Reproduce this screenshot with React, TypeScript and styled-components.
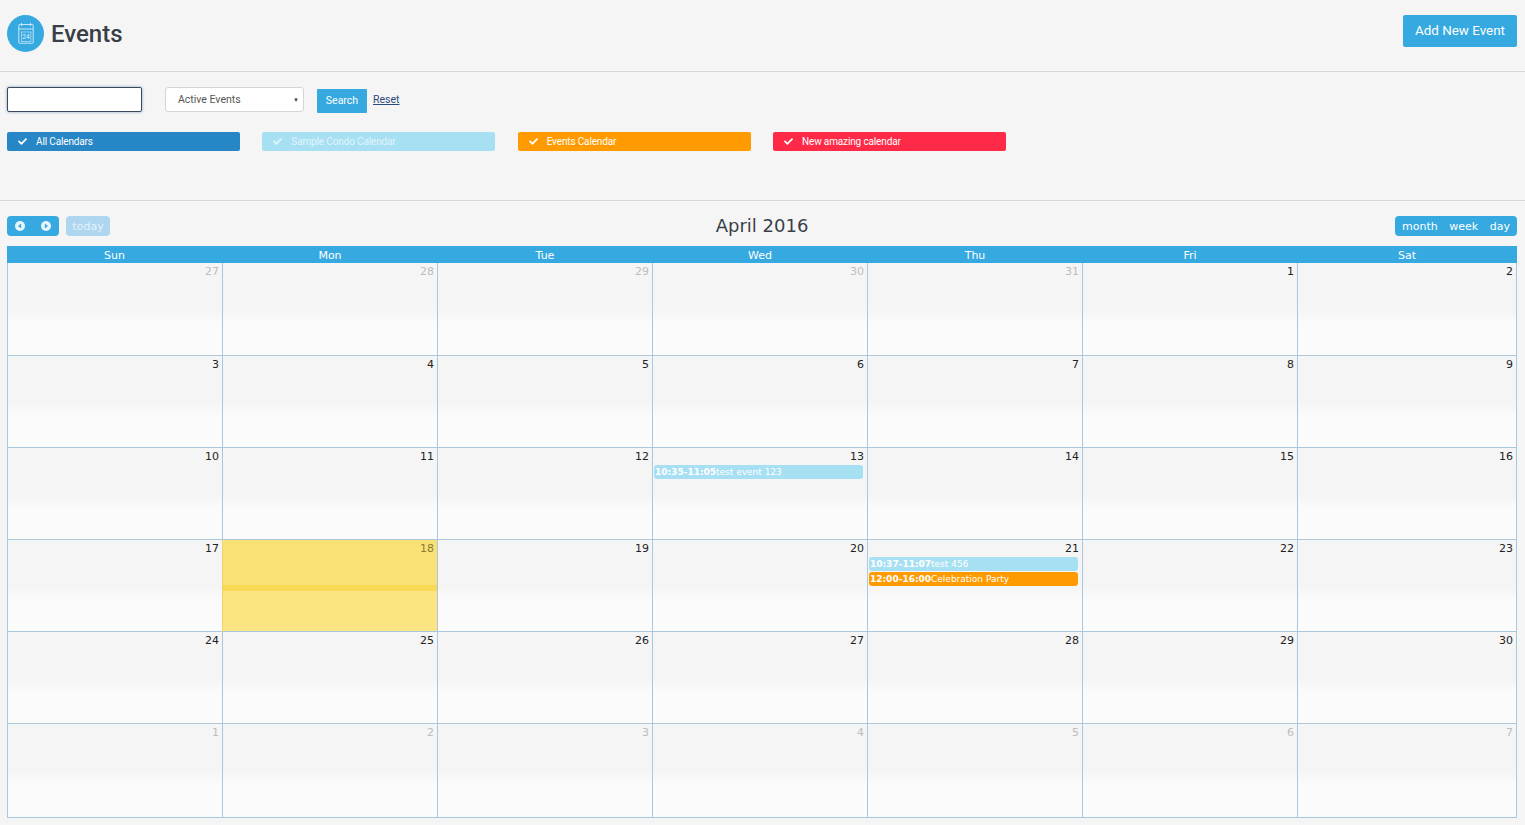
import * as React from "react";
import styled, { createGlobalStyle } from "styled-components";
import { FaCheck } from "react-icons/fa";

const BLUE = "#36a9e1";

const GlobalStyle = createGlobalStyle`
  html, body {
    margin: 0;
    padding: 0;
    background: #f5f5f5;
    font-family: "Roboto", "Liberation Sans", sans-serif;
  }
`;

const Page = styled.div`
  width: 1525px;
  height: 825px;
  overflow: hidden;
  background: #f5f5f5;
`;

const Header = styled.header`
  height: 71px;
  box-sizing: border-box;
  padding: 15px 8px 0 7px;
  display: flex;
  justify-content: space-between;
  align-items: flex-start;
`;

const TitleWrap = styled.div`
  display: flex;
  align-items: center;
  gap: 7px;
`;

const IconCircle = styled.div`
  width: 37px;
  height: 37px;
  border-radius: 50%;
  background: ${BLUE};
  display: flex;
  align-items: center;
  justify-content: center;
`;

const Title = styled.h1`
  margin: 0;
  padding-top: 1px;
  font-size: 24px;
  font-weight: 500;
  color: #393e46;
  line-height: 36px;
`;

const AddButton = styled.button`
  width: 114px;
  height: 32px;
  padding: 0 0 1px;
  border: 0;
  border-radius: 2px;
  background: ${BLUE};
  color: #fff;
  font: 400 13.4px "Roboto", sans-serif;
`;

const Divider = styled.div`
  height: 1px;
  background: #d8d8d8;
`;

const Filters = styled.section`
  height: 128px;
  box-sizing: border-box;
  padding: 15px 7px 0;
`;

const FilterRow = styled.div`
  display: flex;
  align-items: flex-start;
`;

const SearchInput = styled.input`
  width: 135px;
  height: 25px;
  box-sizing: border-box;
  border: 1px solid #3b4a5e;
  border-radius: 2px;
  background: #fff;
  box-shadow: 0 0 3px rgba(54, 100, 150, 0.6);
  outline: 0;
`;

const SelectBox = styled.div`
  width: 139px;
  height: 25px;
  margin-left: 23px;
  box-sizing: border-box;
  padding: 0 4px 0 12px;
  border: 1px solid #d5d5d5;
  border-radius: 3px;
  background: #fff;
  display: flex;
  align-items: center;
  justify-content: space-between;
  font-size: 10.5px;
  color: #555;
`;

const Caret = styled.span`
  font-size: 6px;
  color: #444;
`;

const SearchButton = styled.button`
  width: 50px;
  height: 24px;
  margin: 2px 0 0 13px;
  padding: 0 0 2px;
  border: 0;
  border-radius: 1px;
  background: ${BLUE};
  color: #fff;
  font: 400 10.5px "Roboto", sans-serif;
`;

const ResetLink = styled.a`
  margin: 6px 0 0 6px;
  font-size: 10.5px;
  line-height: 13px;
  color: #2c4a7c;
  text-decoration: underline;
`;

const ChipRow = styled.div`
  display: flex;
  gap: 22.33px;
  margin-top: 19px;
`;

const Chip = styled.div<{ $bg: string; $faded?: boolean }>`
  width: 233px;
  height: 19px;
  box-sizing: border-box;
  padding-left: 11px;
  border-radius: 2px;
  background: ${(p) => p.$bg};
  color: ${(p) => (p.$faded ? "#e2f4fb" : "#fff")};
  font-size: 10px;
  letter-spacing: -0.14px;
  display: flex;
  align-items: center;
  gap: 9px;

  svg {
    width: 9px;
    height: 9px;
  }
`;

const CalendarWrap = styled.section`
  padding: 15px 8px 0 7px;
  font-family: "DejaVu Sans", "Liberation Sans", sans-serif;
`;

const Toolbar = styled.div`
  position: relative;
  height: 30px;
  display: flex;
  justify-content: space-between;
  align-items: flex-start;
`;

const ToolGroup = styled.div`
  display: flex;
  gap: 7px;
`;

const Nav = styled.div`
  width: 52px;
  height: 20px;
  border-radius: 4px;
  background: ${BLUE};
  display: flex;
  align-items: center;
  justify-content: space-between;
  padding: 0 8px;
  box-sizing: border-box;
`;

const TodayButton = styled.div`
  width: 44px;
  height: 20px;
  border-radius: 4px;
  background: #aed6ee;
  color: #e4f2fa;
  font-size: 11px;
  line-height: 22px;
  text-align: center;
`;

const MonthTitle = styled.div`
  position: absolute;
  left: 0;
  right: 0;
  top: -1px;
  text-align: center;
  font-size: 18px;
  line-height: 22px;
  color: #3a3f47;
`;

const ViewSwitch = styled.div`
  height: 20px;
  width: 122px;
  box-sizing: border-box;
  padding: 0 7px;
  border-radius: 4px;
  background: ${BLUE};
  color: #fff;
  font-size: 11px;
  line-height: 22px;
  display: flex;
  justify-content: space-between;
`;

const Grid = styled.div`
  display: grid;
  grid-template-columns: 216px repeat(5, 215px) 219px;
  grid-template-rows: 17px 93px repeat(4, 92px) 94px;
`;

const HeadCell = styled.div`
  padding-right: 1px;
  background: ${BLUE};
  color: #fff;
  font-size: 11px;
  line-height: 19px;
  text-align: center;
`;

const Cell = styled.div<{ $today?: boolean; $first?: boolean }>`
  box-sizing: border-box;
  padding: 2px 3px 0 1px;
  border-bottom: 1px solid #a9c8de;
  border-right: 1px solid #a9c8de;
  border-left: ${(p) => (p.$first ? "1px solid #a9c8de" : "0")};
  box-shadow: ${(p) => (p.$today ? "-1px 0 0 #eed36a" : "none")};
  background: ${(p) =>
    p.$today
      ? "linear-gradient(#f9e275 0, #f9e275 50%, #f8d955 50%, #f8d955 56%, #fbe583 56%, #fbe583 100%)"
      : "linear-gradient(#f5f5f5 0, #f5f5f5 52%, #fbfbfb 65%, #fbfbfb 100%)"};
`;

const DayNumber = styled.div<{ $muted?: boolean; $today?: boolean }>`
  margin-bottom: 2px;
  text-align: right;
  font-size: 11px;
  line-height: 13px;
  color: ${(p) => (p.$muted ? "#bdbdbd" : p.$today ? "#8a7a35" : "#222")};
`;

const EventBar = styled.div<{ $bg: string }>`
  width: 209px;
  height: 14px;
  margin-bottom: 1px;
  padding-left: 1px;
  box-sizing: border-box;
  border-radius: 3px;
  background: ${(p) => p.$bg};
  color: #fff;
  font-size: 9px;
  line-height: 14px;
  white-space: nowrap;
  overflow: hidden;

  b {
    font-weight: 700;
  }
`;

const CalendarIcon = () => (
  <svg width="16" height="21" viewBox="0 0 16 21" fill="none" stroke="#d8eefa" strokeWidth="0.9">
    <rect x="0.8" y="1.5" width="14.4" height="18.7" rx="0.8" />
    <path d="M0.8 6h14.4M3.5 0v3M12.5 0v3" />
    <rect x="3.3" y="9" width="9.6" height="9.6" strokeWidth="0.6" />
    <text x="8" y="16" textAnchor="middle" fontSize="6.5" fill="#e6f5fc" stroke="none" fontFamily="Roboto, sans-serif">
      24
    </text>
  </svg>
);

const NavArrow = ({ dir }: { dir: "left" | "right" }) => (
  <svg width="10" height="10" viewBox="0 0 10 10">
    <circle cx="5" cy="5" r="5" fill="#e8f6fd" />
    <path d={dir === "left" ? "M6.2 2.6v4.8L3 5z" : "M3.8 2.6v4.8L7 5z"} fill={BLUE} />
  </svg>
);

const chips = [
  { label: "All Calendars", bg: "#2787c6" },
  { label: "Sample Condo Calendar", bg: "#a6e0f2", faded: true },
  { label: "Events Calendar", bg: "#ff9b00" },
  { label: "New amazing calendar", bg: "#ff2a48" },
];

const dayNames = ["Sun", "Mon", "Tue", "Wed", "Thu", "Fri", "Sat"];

type CalEvent = { time: string; title: string; bg: string };

// keyed by cell index in the 42 cell grid
const events: Record<number, CalEvent[]> = {
  17: [{ time: "10:35-11:05", title: "test event 123", bg: "#a6e0f2" }],
  25: [
    { time: "10:37-11:07", title: "test 456", bg: "#a6e0f2" },
    { time: "12:00-16:00", title: "Celebration Party", bg: "#ff9b00" },
  ],
};

// 42 cells, starting from Sunday 27 March
const days = Array.from({ length: 42 }, (_, i) => {
  if (i < 5) return { n: 27 + i, muted: true };
  if (i < 35) return { n: i - 4, muted: false };
  return { n: i - 34, muted: true };
});

const App: React.FC = () => (
  <Page>
    <GlobalStyle />
    <Header>
      <TitleWrap>
        <IconCircle>
          <CalendarIcon />
        </IconCircle>
        <Title>Events</Title>
      </TitleWrap>
      <AddButton>Add New Event</AddButton>
    </Header>
    <Divider />
    <Filters>
      <FilterRow>
        <SearchInput />
        <SelectBox>
          Active Events
          <Caret>▼</Caret>
        </SelectBox>
        <SearchButton>Search</SearchButton>
        <ResetLink href="#">Reset</ResetLink>
      </FilterRow>
      <ChipRow>
        {chips.map((c) => (
          <Chip key={c.label} $bg={c.bg} $faded={c.faded}>
            <FaCheck />
            {c.label}
          </Chip>
        ))}
      </ChipRow>
    </Filters>
    <Divider />
    <CalendarWrap>
      <Toolbar>
        <ToolGroup>
          <Nav>
            <NavArrow dir="left" />
            <NavArrow dir="right" />
          </Nav>
          <TodayButton>today</TodayButton>
        </ToolGroup>
        <MonthTitle>April 2016</MonthTitle>
        <ViewSwitch>
          <span>month</span>
          <span>week</span>
          <span>day</span>
        </ViewSwitch>
      </Toolbar>
      <Grid>
        {dayNames.map((d) => (
          <HeadCell key={d}>{d}</HeadCell>
        ))}
        {days.map((d, i) => (
          <Cell key={i} $first={i % 7 === 0} $today={i === 22}>
            <DayNumber $muted={d.muted} $today={i === 22}>
              {d.n}
            </DayNumber>
            {(events[i] || []).map((e) => (
              <EventBar key={e.time} $bg={e.bg}>
                <b>{e.time}</b>
                {e.title}
              </EventBar>
            ))}
          </Cell>
        ))}
      </Grid>
    </CalendarWrap>
  </Page>
);

export default App;
